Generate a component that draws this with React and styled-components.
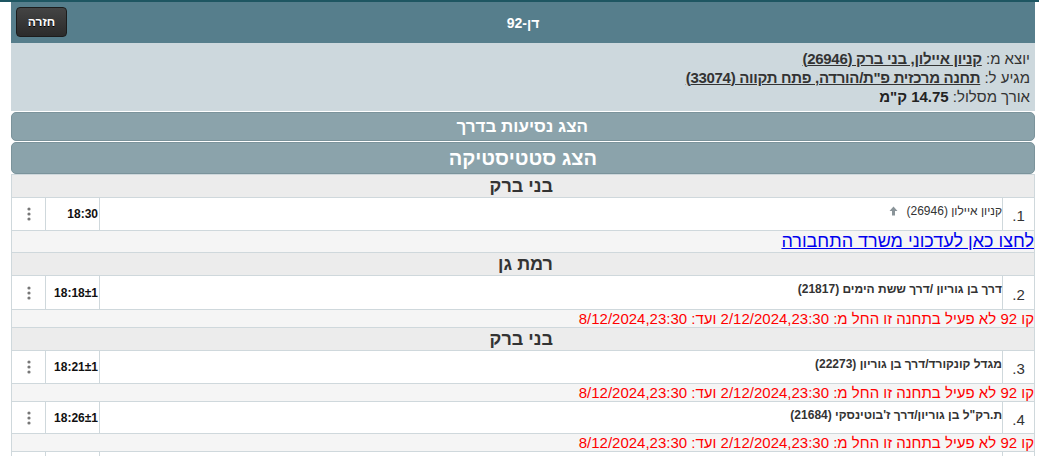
import React from "react";
import styled, { createGlobalStyle } from "styled-components";

const Global = createGlobalStyle`
  html, body { margin: 0; padding: 0; background: #fff; }
  body { font-family: "Liberation Sans", Arial, sans-serif; }
`;

const TopLine = styled.div`
  height: 2px;
  background: #1e5662;
`;

const Page = styled.div`
  direction: rtl;
  margin: 0 4px 0 11px;
  width: 1024px;
`;

const Header = styled.header`
  position: relative;
  height: 41px;
  background: #567e8c;
  display: flex;
  align-items: center;
  justify-content: center;
`;

const Title = styled.h1`
  margin: 0;
  font-size: 14px;
  font-weight: bold;
  color: #fff;
`;

const BackButton = styled.button`
  position: absolute;
  left: 5px;
  top: 5px;
  width: 51px;
  height: 30px;
  border: 1px solid #1c1c1c;
  border-radius: 4px;
  background: linear-gradient(#444, #2b2b2b);
  color: #fff;
  font-family: "Liberation Sans", Arial, sans-serif;
  font-size: 12px;
  font-weight: bold;
  text-shadow: 0 1px 0 #000;
  padding: 0;
`;

const Info = styled.section`
  background: #cdd8dd;
  padding: 6px 5px 5px;
  font-size: 15px;
  line-height: 19px;
  color: #333;
`;

const InfoLink = styled.a`
  color: #333;
  font-weight: bold;
  letter-spacing: -0.3px;
  text-decoration: underline;
`;

const Strong = styled.b`
  color: #222;
`;

const Toggle = styled.div`
  margin-top: 1px;
  height: ${(p) => p.$h}px;
  background: #8ba3ab;
  border: 1px solid #7b939b;
  border-radius: 5px;
  box-sizing: border-box;
  display: flex;
  align-items: center;
  padding-right: ${(p) => p.$pr}px;
  color: #fff;
  font-weight: bold;
  font-size: ${(p) => p.$fs}px;
`;

const Table = styled.div`
  border-left: 1px solid #cfd8dc;
  border-right: 1px solid #cfd8dc;
`;

const GroupRow = styled.div`
  height: 23px;
  box-sizing: border-box;
  background: #ececec;
  border-top: 1px solid #cfd8dc;
  padding-right: 481px;
  font-size: 18px;
  font-weight: bold;
  color: #333;
  line-height: 22px;
  white-space: nowrap;
`;

const StopRow = styled.div`
  display: grid;
  grid-template-columns: 31px 1fr 54px 33px;
  height: ${(p) => p.$h}px;
  background: #fff;
  border-top: 1px solid #cfd8dc;
  box-sizing: border-box;
`;

const NumCell = styled.div`
  font-size: 15px;
  color: #333;
  display: flex;
  align-items: center;
  justify-content: center;
  padding-top: 3px;
`;

const NameCell = styled.div`
  border-right: 1px solid #cfd8dc;
  border-left: 1px solid #cfd8dc;
  font-size: 12px;
  font-weight: ${(p) => (p.$bold ? "bold" : "normal")};
  color: #333;
  padding-top: 6px;
  display: flex;
  align-items: flex-start;
  gap: 9px;
`;

const TimeCell = styled.div`
  border-left: 1px solid #cfd8dc;
  font-size: 12px;
  font-weight: bold;
  color: #111;
  display: flex;
  align-items: center;
  direction: ltr;
  justify-content: flex-end;
  padding-right: 1px;
`;

const DotsCell = styled.div`
  display: flex;
  align-items: center;
  justify-content: center;
`;

const NoteRow = styled.div`
  background: #f5f5f5;
  border-top: 1px solid #cfd8dc;
  height: ${(p) => p.$h}px;
  box-sizing: border-box;
  font-size: ${(p) => p.$fs}px;
  line-height: ${(p) => p.$h - 1}px;
  color: ${(p) => p.$color};
  white-space: nowrap;
  overflow: hidden;
`;

const BlueLink = styled.a`
  color: #0000ee;
  text-decoration: underline;
`;

const Dots = () => (
  <svg width="4" height="14" viewBox="0 0 4 14">
    <circle cx="2" cy="2" r="1.6" fill="#777" />
    <circle cx="2" cy="7" r="1.6" fill="#777" />
    <circle cx="2" cy="12" r="1.6" fill="#777" />
  </svg>
);

const UpArrow = () => (
  <svg width="9" height="10" viewBox="0 0 9 10" style={{ marginTop: 2 }}>
    <path d="M4.5 0.5 L8.5 5 L6 5 L6 9.5 L3 9.5 L3 5 L0.5 5 Z" fill="#8a9499" />
  </svg>
);

const notice = "קו 92 לא פעיל בתחנה זו החל מ: 2/12/2024,23:30 ועד: 8/12/2024,23:30";

const stops = [
  { group: "בני ברק", n: 1, name: "קניון איילון (26946)", time: "18:30", arrow: true, note: "link", h: 33 },
  { group: "רמת גן", n: 2, name: "דרך בן גוריון /דרך ששת הימים (21817)", time: "18:18±1", bold: true, note: "red", h: 34 },
  { group: "בני ברק", n: 3, name: "מגדל קונקורד/דרך בן גוריון (22273)", time: "18:21±1", bold: true, note: "red", h: 33 },
  { group: null, n: 4, name: "ת.רק\"ל בן גוריון/דרך ז'בוטינסקי (21684)", time: "18:26±1", bold: true, note: "red", h: 32 },
];

export default function App() {
  return (
    <>
      <Global />
      <TopLine />
      <Page>
        <Header>
          <Title>דן-92</Title>
          <BackButton>חזרה</BackButton>
        </Header>
        <Info>
          <div>
            יוצא מ: <InfoLink href="#">קניון איילון, בני ברק (26946)</InfoLink>
          </div>
          <div>
            מגיע ל: <InfoLink href="#">תחנה מרכזית פ"ת/הורדה, פתח תקווה (33074)</InfoLink>
          </div>
          <div>
            אורך מסלול: <Strong>14.75 ק"מ</Strong>
          </div>
        </Info>
        <Toggle $h={29} $fs={17} $pr={446}>הצג נסיעות בדרך</Toggle>
        <Toggle $h={32} $fs={20} $pr={437}>הצג סטטיסטיקה</Toggle>
        <Table>
          {stops.map((s) => (
            <React.Fragment key={s.n}>
              {s.group && <GroupRow>{s.group}</GroupRow>}
              <StopRow $h={s.h}>
                <NumCell>{s.n}.</NumCell>
                <NameCell $bold={s.bold}>
                  <span>{s.name}</span>
                  {s.arrow && <UpArrow />}
                </NameCell>
                <TimeCell>{s.time}</TimeCell>
                <DotsCell>
                  <Dots />
                </DotsCell>
              </StopRow>
              {s.note === "link" ? (
                <NoteRow $h={22} $fs={18} $color="#00e">
                  <BlueLink href="#">לחצו כאן לעדכוני משרד התחבורה</BlueLink>
                </NoteRow>
              ) : (
                <NoteRow $h={18} $fs={15} $color="#f00">
                  {notice}
                </NoteRow>
              )}
            </React.Fragment>
          ))}
          <StopRow $h={10}>
            <NumCell />
            <NameCell />
            <TimeCell />
            <DotsCell />
          </StopRow>
        </Table>
      </Page>
    </>
  );
}
